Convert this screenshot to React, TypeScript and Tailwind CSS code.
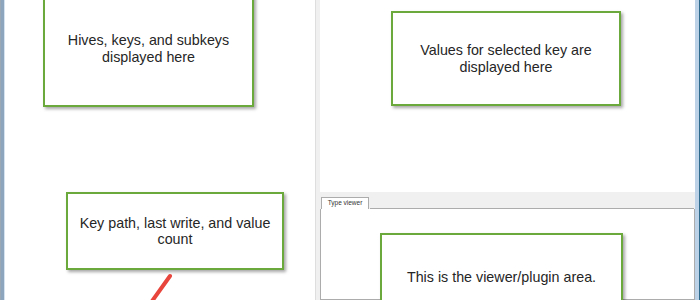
import React from 'react';

const Callout: React.FC<{ className: string; children: React.ReactNode }> = ({ className, children }) => (
  <div
    className={`absolute flex items-center justify-center text-center bg-white border-2 border-[#6ba93d] shadow-[2px_2px_3px_rgba(0,0,0,0.35)] text-[14.3px] leading-[16.5px] text-[#262626] ${className}`}
  >
    <div>{children}</div>
  </div>
);

export default function App() {
  return (
    <div
      className="relative w-[700px] h-[300px] overflow-hidden flex bg-white"
      style={{ fontFamily: '"Liberation Sans", Arial, sans-serif' }}
    >
      {/* left window frame */}
      <div className="flex h-full">
        <div className="w-px bg-[#9aa8b6]" />
        <div className="w-[3px] bg-[#8ea6bd]" />
        <div className="w-px bg-[#d5e3f1]" />
      </div>

      {/* registry tree pane */}
      <div className="w-[310px] h-full bg-white" />

      {/* vertical splitter */}
      <div className="w-[5px] h-full bg-[#f0f0f0] border-l border-[#dedede]" />

      {/* right column */}
      <div className="w-[375px] h-full flex flex-col">
        <div className="h-[192px] bg-white" />
        <div className="h-[5px] bg-[#f0f0f0]" />
        <div className="h-[12px] bg-[#f0f0f0] flex items-end">
          <div className="ml-px h-[12px] w-[48px] bg-white border border-b-0 border-[#acacac] flex items-center justify-center text-[6.5px] text-[#333] leading-none">
            Type viewer
          </div>
        </div>
        <div className="flex-1 bg-white border border-t-0 border-[#acacac] relative">
          <div className="absolute -top-px left-[49px] right-0 h-px bg-[#acacac]" />
        </div>
      </div>

      {/* right window frame */}
      <div className="flex h-full">
        <div className="w-[4px] bg-[#bdd2e7]" />
        <div className="w-px bg-[#2d6a8b]" />
      </div>

      <Callout className="left-[43px] top-[-10px] w-[211px] h-[117px]">
        Hives, keys, and subkeys
        <br />
        displayed here
      </Callout>

      <Callout className="left-[391px] top-[11px] w-[230px] h-[95px]">
        Values for selected key are
        <br />
        displayed here
      </Callout>

      <Callout className="left-[66px] top-[192px] w-[218px] h-[78px]">
        Key path, last write, and value
        <br />
        count
      </Callout>

      <Callout className="left-[380px] top-[233px] w-[243px] h-[88px]">
        This is the viewer/plugin area.
      </Callout>

      {/* red pointer */}
      <svg className="absolute left-0 top-0" width="700" height="300">
        <line x1="170" y1="276" x2="150" y2="304" stroke="#e8463d" strokeWidth="4" strokeLinecap="round" />
      </svg>
    </div>
  );
}
